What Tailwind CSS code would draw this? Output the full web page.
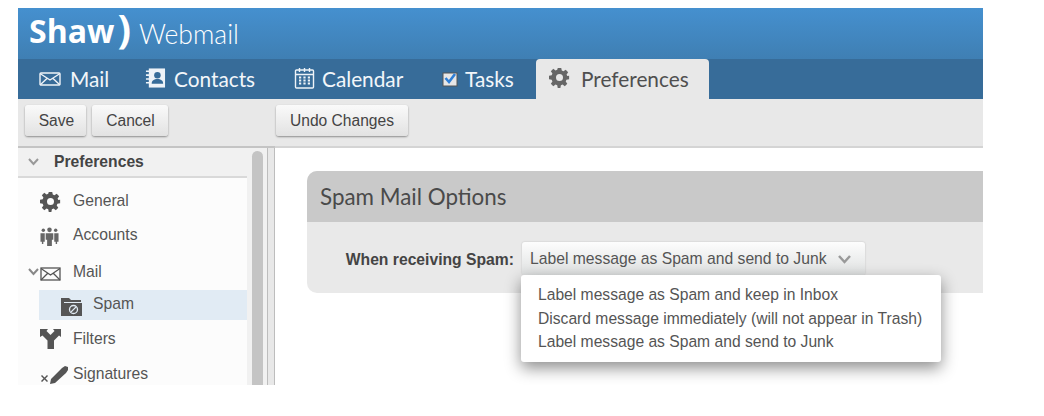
<!doctype html>
<html>
<head>
<meta charset="utf-8">
<script src="https://cdn.jsdelivr.net/npm/@tailwindcss/browser@4"></script>
</head>
<body class="bg-white">
<div class="w-[1044px] h-[416px] bg-white pt-2 pl-[18px] overflow-hidden font-['Liberation_Sans',sans-serif]">
  <div class="w-[965px] h-[377px] flex flex-col overflow-hidden bg-white relative">
    <header class="h-[51px] shrink-0 bg-gradient-to-b from-[#4590cf] to-[#3f7fb3] flex items-center pl-[11px] text-white">
      <span class="font-['Open_Sans',sans-serif] font-bold text-[32px] leading-[40px] -mt-[6px] whitespace-nowrap">Shaw<span class="text-[40px] leading-[30px] ml-[3px]">)</span></span>
      <span class="font-['Lato',sans-serif] font-light text-[26.5px] leading-none ml-[8px] mt-[1px]">Webmail</span>
    </header>
    <nav class="h-10 shrink-0 bg-[#376c99] flex font-['Lato',sans-serif] text-[20.8px] text-[#f2f6fa]">
      <div class="flex items-center pl-[21px] w-[109px] gap-[9px]">
        <svg width="22" height="14" viewBox="0 0 22 14" fill="none" stroke="#eef3f8" stroke-width="1.4"><rect x="1" y="1" width="20" height="12" rx="1"/><path d="M1 1.5l10 6.500 10-6.500M1 13l7.500-7M21 13l-7.500-7"/></svg>
        <span class="-mt-[1px]">Mail</span>
      </div>
      <div class="flex items-center pl-[18px] w-[149px] gap-2">
        <svg width="21" height="22" viewBox="0 0 22 22" class="-mt-[2px]"><path d="M4 1h17v20H4z" fill="#eef3f8"/><path d="M1 4h5M1 8h5M1 12h5M1 16h5" stroke="#eef3f8" stroke-width="1.600"/><circle cx="13" cy="8" r="3.400" fill="#376c99"/><path d="M7 17c0-3.500 2.500-5 6-5s6 1.500 6 5z" fill="#376c99"/></svg>
        <span class="-mt-[1px]">Contacts</span>
      </div>
      <div class="flex items-center pl-[18px] w-[148px] gap-[7px]">
        <svg width="21" height="22" viewBox="0 0 20 22" fill="none" stroke="#eef3f8" stroke-width="1.400" class="-mt-[2px]"><rect x="1" y="3" width="18" height="18" rx="1"/><path d="M1 7.500h18M5 1v4M10 1v4M15 1v4"/><path d="M4.500 10.500h11M4.500 13.500h11M4.500 16.500h11" stroke-width="1.800" stroke-dasharray="2.200 2.200"/></svg>
        <span class="-mt-[1px]">Calendar</span>
      </div>
      <div class="flex items-center pl-[18px] w-[112px] gap-[7px]">
        <svg width="16" height="16" viewBox="0 0 16 16"><rect x="1" y="2" width="14" height="13" fill="#e7e7e7" stroke="#555" stroke-width="1"/><path d="M3.500 7l3.500 4 6-8" fill="none" stroke="#2f7fd6" stroke-width="2.600"/></svg>
        <span class="-mt-[1px]">Tasks</span>
      </div>
      <div class="w-[173px] bg-[#e8e8e8] rounded-t-[4px] flex items-center pl-[13px] gap-[11px] text-[#4f4f4f]">
        <svg width="21" height="21" viewBox="0 0 24 24" fill="#666" class="-mt-1"><path fill-rule="evenodd" d="M10 1h4l.6 3.100 1.900.8 2.600-1.800 2.800 2.800-1.800 2.600.8 1.900L23 10v4l-3.100.6-.8 1.900 1.800 2.600-2.800 2.800-2.600-1.800-1.900.8L13 24h-3l-.6-3.100-1.900-.8-2.600 1.800-2.800-2.800 1.800-2.600-.8-1.900L0 14v-4l3.100-.6.800-1.900L2.100 4.900l2.800-2.800 2.600 1.800 1.900-.8zM12 8a4 4 0 1 0 0 8 4 4 0 0 0 0-8z"/></svg>
        <span class="-mt-[1px]">Preferences</span>
      </div>
    </nav>
    <div class="h-[47px] shrink-0 bg-[#e8e8e8] flex items-start pt-[6px] pl-[7px] text-[15.6px] text-[#444]">
      <button class="h-[31px] w-[61px] pl-[2px] rounded-[3px] bg-gradient-to-b from-[#fafafa] to-[#e2e2e2] shadow-[0_1px_2px_rgba(0,0,0,0.4)]">Save</button>
      <button class="h-[31px] w-[76px] ml-[6px] pl-[1px] rounded-[3px] bg-gradient-to-b from-[#fafafa] to-[#e2e2e2] shadow-[0_1px_2px_rgba(0,0,0,0.4)]">Cancel</button>
      <button class="h-[31px] w-[132px] ml-[108px] rounded-[3px] bg-gradient-to-b from-[#fafafa] to-[#e2e2e2] shadow-[0_1px_2px_rgba(0,0,0,0.4)]">Undo Changes</button>
    </div>
    <div class="flex-1 flex min-h-0 bg-white">
      <aside class="w-[229px] shrink-0 bg-[#fcfcfc] text-[15.7px] text-[#555] border-t-2 border-[#c4c4c4]">
        <div class="h-[30px] bg-[#f1f1f1] border-b-2 border-[#d9d9d9] flex items-center pl-[10px] font-bold text-[#444]">
          <svg width="11" height="8" viewBox="0 0 11 8" fill="none" stroke="#999" stroke-width="2"><path d="M1 1l4.500 5L10 1"/></svg>
          <span class="ml-[15px] -mt-[1px]">Preferences</span>
        </div>
        <div class="h-[34px] mt-[6px] flex items-center pl-[22px]">
          <svg width="21" height="21" viewBox="0 0 24 24" fill="#555"><path fill-rule="evenodd" d="M10 1h4l.6 3.100 1.900.8 2.600-1.800 2.800 2.800-1.800 2.600.8 1.900L23 10v4l-3.100.6-.8 1.900 1.800 2.600-2.800 2.800-2.600-1.800-1.900.8L13 24h-3l-.6-3.100-1.900-.8-2.600 1.800-2.800-2.800 1.800-2.600-.8-1.900L0 14v-4l3.100-.6.800-1.900L2.100 4.900l2.800-2.800 2.600 1.800 1.900-.8zM12 8a4 4 0 1 0 0 8 4 4 0 0 0 0-8z"/></svg>
          <span class="ml-[12px]">General</span>
        </div>
        <div class="h-[34px] flex items-center pl-[22px]">
          <svg width="19" height="21" viewBox="0 0 20 20" fill="#666" class="mt-[3px]"><circle cx="10" cy="3" r="2.400"/><circle cx="3.500" cy="3.500" r="1.800"/><circle cx="16.500" cy="3.500" r="1.800"/><path d="M6 6.500h8v7h-1.500V20h-5v-6.500H6zM0.500 6.500h4.500v9H3.500V18H2v-2.500H0.500zM15 6.500h4.500v9H18V18h-1.500v-2.500H15z"/></svg>
          <span class="ml-[14px]">Accounts</span>
        </div>
        <div class="h-[38px] flex items-center pl-[10px]">
          <svg width="11" height="8" viewBox="0 0 11 8" fill="none" stroke="#888" stroke-width="2" class="mt-[2px]"><path d="M1 1l4.500 5L10 1"/></svg>
          <svg width="21" height="14" viewBox="0 0 21 14" fill="none" stroke="#555" stroke-width="1.300" class="ml-[1px] mt-[5px]"><rect x="1" y="1" width="19" height="12"/><path d="M1 1.500l9.500 6.500L20 1.500M1 13l7-7M20 13l-7-7"/></svg>
          <span class="ml-[12px] mt-[2px]">Mail</span>
        </div>
        <div class="h-[30px] ml-[21px] bg-[#e1ebf4] flex items-center pl-[22px]">
          <svg width="21" height="19" viewBox="0 0 21 19" class="mt-[2px]"><path d="M0 1h8l2 2h10v2H3v14H0z" fill="#555"/><path d="M3 6h18v13H3z" fill="#555"/><circle cx="12.500" cy="12.500" r="4" fill="none" stroke="#e1ebf4" stroke-width="1.300"/><path d="M10 15l5-5" stroke="#e1ebf4" stroke-width="1.100"/></svg>
          <span class="ml-[11px] -mt-[2px]">Spam</span>
        </div>
        <div class="h-[34px] mt-[2px] flex items-center pl-[22px]">
          <svg width="21" height="20" viewBox="0 0 21 20" fill="#555"><path d="M0 0h8L6.500 2 10.500 6 14.500 2 13 0h8v8l-2-1.500-5 5V20H7.500v-8.500l-5-5L0 8z"/></svg>
          <span class="ml-[12px]">Filters</span>
        </div>
        <div class="h-[29px] flex items-start pl-[22px]">
          <svg width="29" height="22" viewBox="0 0 29 22" fill="#555" class="mt-[9px]"><path d="M1 11l1-1 2.500 2.500L7 10l1 1-2.500 2.500L8 16l-1 1-2.500-2.500L2 17l-1-1 2.500-2.500zM11 14L22 3l3-2 3 1 0 3-2 3L15 18l-5 1zM0 20h10v2H0z"/></svg>
          <span class="ml-[4px] mt-[6px]">Signatures</span>
        </div>
      </aside>
      <div class="w-[28px] shrink-0 bg-[#f1f1f1] relative border-t-2 border-[#c4c4c4]">
        <div class="absolute left-[5px] top-[3px] bottom-0 w-[11px] bg-[#c4c4c4] rounded-t-md"></div>
        <div class="absolute left-[20px] top-0 bottom-0 w-[8px] bg-[#e8e8e8] border-x border-[#bdbdbd]"></div>
      </div>
      <main class="flex-1 min-w-0 bg-white border-t-2 border-[#d4d4d4] pl-[32px] pt-[23px] relative">
        <section class="h-[122px] bg-[#e9e9e9] rounded-l-[10px] overflow-hidden">
          <div class="h-[51px] bg-[#c9c9c9] flex items-center pl-[13px] font-['Lato',sans-serif] text-[22.4px] text-[#4a4a4a]">Spam Mail Options</div>
          <div class="flex items-start pt-[20px] text-[15.7px]">
            <span class="w-[207px] text-right font-bold text-[#444] mt-[6px]">When receiving Spam:</span>
            <div class="ml-[7.500px] h-[33px] w-[343.500px] rounded-[3px] bg-gradient-to-b from-[#fdfdfd] to-[#dfe1e1] shadow-[0_0_2px_rgba(0,0,0,0.2)] flex items-center pl-[8.500px] text-[#555]">
              <span>Label message as Spam and send to Junk</span>
              <svg width="13" height="9" viewBox="0 0 13 9" fill="none" stroke="#999" stroke-width="2.500" class="ml-[11px] mt-[1px]"><path d="M1 1l5.500 6L12 1"/></svg>
            </div>
          </div>
        </section>
        <div class="absolute left-[246px] top-[127px] w-[420px] h-[87px] bg-white rounded-[3px] shadow-[0_6px_16px_rgba(0,0,0,0.45)] pl-[17px] pt-[8px] text-[15.65px] leading-[23.500px] text-[#555]">
          <div>Label message as Spam and keep in Inbox</div>
          <div>Discard message immediately (will not appear in Trash)</div>
          <div>Label message as Spam and send to Junk</div>
        </div>
      </main>
    </div>
  </div>
</div>
</body>
</html>
